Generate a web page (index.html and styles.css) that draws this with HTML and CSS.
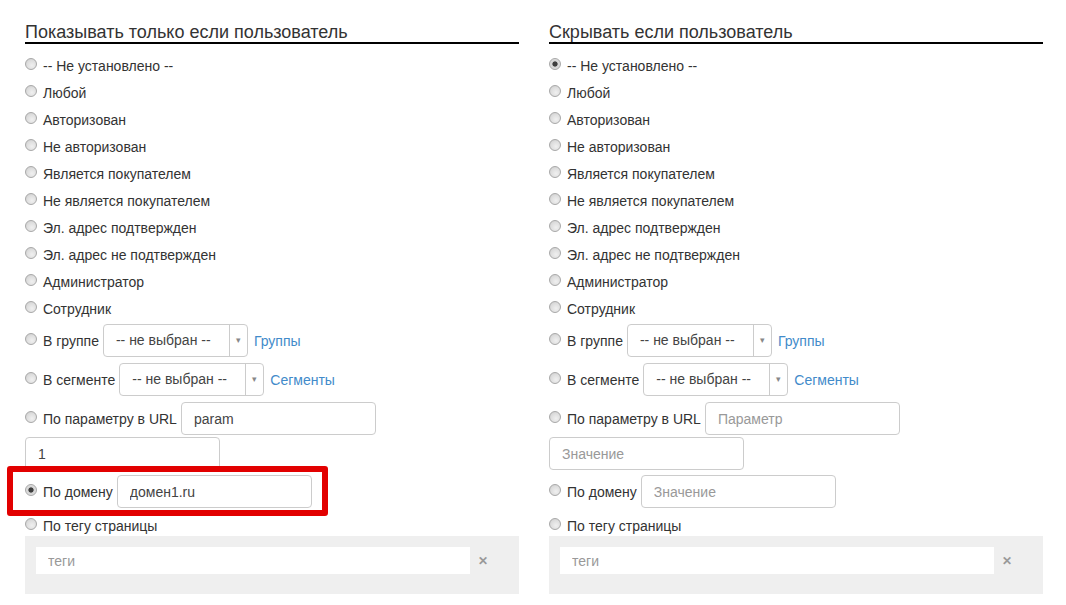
FILE: index.html
```html
<!DOCTYPE html>
<html lang="ru">
<head>
    <meta charset="UTF-8">
    <title>Условия показа</title>
    <link rel="stylesheet" href="styles.css">
</head>
<body>
    <main class="columns">
        <section class="col">
            <h2>Показывать только если пользователь</h2>
            <div class="opt"><input type="radio" name="show"><span>-- Не установлено --</span></div>
            <div class="opt"><input type="radio" name="show"><span>Любой</span></div>
            <div class="opt"><input type="radio" name="show"><span>Авторизован</span></div>
            <div class="opt"><input type="radio" name="show"><span>Не авторизован</span></div>
            <div class="opt"><input type="radio" name="show"><span>Является покупателем</span></div>
            <div class="opt"><input type="radio" name="show"><span>Не является покупателем</span></div>
            <div class="opt"><input type="radio" name="show"><span>Эл. адрес подтвержден</span></div>
            <div class="opt"><input type="radio" name="show"><span>Эл. адрес не подтвержден</span></div>
            <div class="opt"><input type="radio" name="show"><span>Администратор</span></div>
            <div class="opt"><input type="radio" name="show"><span>Сотрудник</span></div>
            <div class="opt ctl first-ctl">
                <input type="radio" name="show"><span>В группе</span>
                <div class="sel"><span class="sel-text">-- не выбран --</span><span class="sel-arrow">&#9662;</span></div>
                <a href="#">Группы</a>
            </div>
            <div class="opt ctl">
                <input type="radio" name="show"><span>В сегменте</span>
                <div class="sel"><span class="sel-text">-- не выбран --</span><span class="sel-arrow">&#9662;</span></div>
                <a href="#">Сегменты</a>
            </div>
            <div class="opt ctl">
                <input type="radio" name="show"><span>По параметру в URL</span>
                <input class="field" type="text" value="param" placeholder="Параметр">
            </div>
            <div class="value-row">
                <input class="field" type="text" value="1" placeholder="Значение">
            </div>
            <div class="opt ctl domain">
                <input type="radio" name="show" checked><span>По домену</span>
                <input class="field" type="text" value="домен1.ru" placeholder="Значение">
                <div class="highlight"></div>
            </div>
            <div class="opt tag"><input type="radio" name="show"><span>По тегу страницы</span></div>
            <div class="tags">
                <input class="tag-input" type="text" placeholder="теги">
                <span class="clear">&#10005;</span>
            </div>
        </section>

        <section class="col">
            <h2>Скрывать если пользователь</h2>
            <div class="opt"><input type="radio" name="hide" checked><span>-- Не установлено --</span></div>
            <div class="opt"><input type="radio" name="hide"><span>Любой</span></div>
            <div class="opt"><input type="radio" name="hide"><span>Авторизован</span></div>
            <div class="opt"><input type="radio" name="hide"><span>Не авторизован</span></div>
            <div class="opt"><input type="radio" name="hide"><span>Является покупателем</span></div>
            <div class="opt"><input type="radio" name="hide"><span>Не является покупателем</span></div>
            <div class="opt"><input type="radio" name="hide"><span>Эл. адрес подтвержден</span></div>
            <div class="opt"><input type="radio" name="hide"><span>Эл. адрес не подтвержден</span></div>
            <div class="opt"><input type="radio" name="hide"><span>Администратор</span></div>
            <div class="opt"><input type="radio" name="hide"><span>Сотрудник</span></div>
            <div class="opt ctl first-ctl">
                <input type="radio" name="hide"><span>В группе</span>
                <div class="sel"><span class="sel-text">-- не выбран --</span><span class="sel-arrow">&#9662;</span></div>
                <a href="#">Группы</a>
            </div>
            <div class="opt ctl">
                <input type="radio" name="hide"><span>В сегменте</span>
                <div class="sel"><span class="sel-text">-- не выбран --</span><span class="sel-arrow">&#9662;</span></div>
                <a href="#">Сегменты</a>
            </div>
            <div class="opt ctl">
                <input type="radio" name="hide"><span>По параметру в URL</span>
                <input class="field" type="text" placeholder="Параметр">
            </div>
            <div class="value-row">
                <input class="field" type="text" placeholder="Значение">
            </div>
            <div class="opt ctl domain">
                <input type="radio" name="hide"><span>По домену</span>
                <input class="field" type="text" placeholder="Значение">
            </div>
            <div class="opt tag"><input type="radio" name="hide"><span>По тегу страницы</span></div>
            <div class="tags">
                <input class="tag-input" type="text" placeholder="теги">
                <span class="clear">&#10005;</span>
            </div>
        </section>
    </main>
</body>
</html>
```

FILE: styles.css
```css
body {
    margin: 0;
    background: #fff;
    font-family: 'Liberation Sans', Arial, sans-serif;
    font-size: 14px;
    color: #333;
}
.columns {
    display: grid;
    grid-template-columns: 494px 494px;
    column-gap: 30px;
    padding: 22px 0 0 25px;
}
.col h2 {
    margin: 0 0 8px;
    font-size: 18px;
    font-weight: normal;
    line-height: 20px;
    color: #333;
    border-bottom: 2px solid #000;
}
.opt {
    display: flex;
    align-items: center;
    height: 27px;
    white-space: nowrap;
}
.opt input[type="radio"] {
    appearance: none;
    -webkit-appearance: none;
    box-sizing: border-box;
    width: 12px;
    height: 12px;
    margin: 0 6px 0 0;
    position: relative;
    top: -2px;
    border: 1px solid #a8a8a8;
    border-radius: 50%;
    background: radial-gradient(circle at 60% 65%, #f0f0f0 0%, #dedede 55%, #c8c8c8 100%);
}
.opt input[type="radio"]:checked {
    background: radial-gradient(circle, #3f3f3f 0, #3f3f3f 2.2px, #d4d4d4 3px, #e8e8e8 100%);
}
.ctl {
    height: 33px;
    margin-top: 6px;
}
.ctl.first-ctl {
    margin-top: 2px;
}
.sel {
    box-sizing: border-box;
    display: flex;
    width: 145px;
    height: 33px;
    margin-left: 4px;
    border: 1px solid #ccc;
    border-radius: 4px;
    background: #fff;
    color: #444;
}
.sel-text {
    flex: 1;
    padding-left: 12px;
    line-height: 31px;
}
.sel-arrow {
    width: 17px;
    border-left: 1px solid #ccc;
    text-align: center;
    line-height: 31px;
    font-size: 9px;
    color: #888;
}
.opt a {
    margin-left: 6px;
    color: #428bca;
    text-decoration: none;
}
.field {
    box-sizing: border-box;
    width: 195px;
    height: 33px;
    margin: 0 0 0 4px;
    padding: 0 12px;
    border: 1px solid #ccc;
    border-radius: 4px;
    font-family: inherit;
    font-size: 14px;
    color: #444;
    background: #fff;
    outline: none;
}
.field::placeholder,
.tag-input::placeholder {
    color: #999;
}
.value-row {
    margin-top: 2px;
    height: 33px;
}
.value-row .field {
    margin-left: 0;
}
.domain {
    margin-top: 5px;
    position: relative;
}
.highlight {
    position: absolute;
    left: -18px;
    top: -9px;
    width: 321px;
    height: 50px;
    box-sizing: border-box;
    border: 6px solid #e20000;
    border-radius: 3px;
    pointer-events: none;
}
.tag {
    height: 20px;
    margin-top: 8px;
}
.tags {
    display: flex;
    align-items: center;
    height: 58px;
    box-sizing: border-box;
    padding: 11px 0 20px 11px;
    background: #efefef;
}
.tag-input {
    box-sizing: border-box;
    width: 434px;
    height: 27px;
    padding: 0 12px;
    border: 0;
    background: #fff;
    font-family: inherit;
    font-size: 14px;
    outline: none;
}
.clear {
    margin-left: 8px;
    font-size: 12px;
    font-weight: bold;
    color: #999;
}
```
